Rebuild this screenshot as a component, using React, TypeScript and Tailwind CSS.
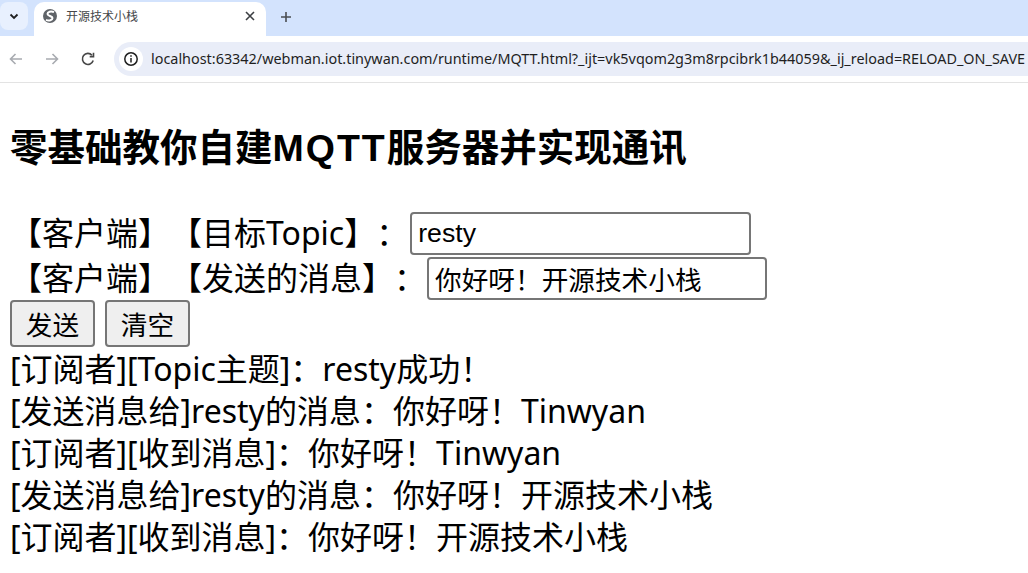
import React from "react";

const sans = "font-['Liberation_Sans','Noto_Sans_CJK_SC',sans-serif]";
const page = "font-['Noto_Sans','Noto_Sans_CJK_SC',sans-serif] [text-spacing-trim:space-all]";

function Globe() {
  return (
    <svg width="16" height="16" viewBox="0 0 16 16">
      <circle cx="8" cy="8" r="7" fill="#5f6368" />
      <path d="M12 4.2 C9 2.8 5.5 3.8 5.5 6 C5.5 8 10.5 8 10.5 10 C10.5 12 7 13.2 4 11.8" fill="none" stroke="#fff" strokeWidth="2" />
    </svg>
  );
}

function Arrow({ flip }: { flip?: boolean }) {
  return (
    <svg width="16" height="16" viewBox="0 0 16 16" fill="none" stroke="#a8abb0" strokeWidth="1.6" className={flip ? "-scale-x-100" : ""}>
      <path d="M14 8 H2.5 M7.5 3 L2.5 8 L7.5 13" />
    </svg>
  );
}

function Chrome() {
  return (
    <div className={`${sans} shrink-0`}>
      <div className="h-9 bg-[#d3e3fd] flex items-end">
        <div className="w-[28px] h-[28px] mb-[6px] rounded-lg bg-[#e8f0fe] flex items-center justify-center">
          <svg width="12" height="12" viewBox="0 0 12 12" fill="none" stroke="#1f1f1f" strokeWidth="1.8">
            <path d="M2.5 4.5 L6 8 L9.5 4.5" />
          </svg>
        </div>
        <div className="ml-[6px] w-[232px] h-[34px] bg-white rounded-t-[10px] flex items-center pl-[8px] pr-[10px] pb-[6px]">
          <Globe />
          <span className="ml-[8px] pt-[1px] text-[12px] text-[#45474a] flex-1">开源技术小栈</span>
          <svg width="12" height="12" viewBox="0 0 12 12" fill="none" stroke="#3c3f43" strokeWidth="1.6">
            <path d="M2 2 L10 10 M10 2 L2 10" />
          </svg>
        </div>
        <div className="ml-[14px] mb-[13px]">
          <svg width="12" height="12" viewBox="0 0 12 12" fill="none" stroke="#4a4d51" strokeWidth="1.6">
            <path d="M6 1 V11 M1 6 H11" />
          </svg>
        </div>
      </div>
      <div className="h-[47px] bg-white border-b border-[#e3e3e3] flex items-center pb-[1px]">
        <div className="ml-[8px]"><Arrow /></div>
        <div className="ml-[20px]"><Arrow flip /></div>
        <div className="ml-[20px]">
          <svg width="16" height="16" viewBox="0 0 16 16" fill="none" stroke="#474747" strokeWidth="1.6">
            <path d="M13.2 9.5 A5.5 5.5 0 1 1 12 4.2" />
            <path d="M13.5 1.8 V5.6 H9.7" />
          </svg>
        </div>
        <div className="ml-[18px] w-[914px] h-[34px] bg-[#e9edf8] rounded-l-[17px] flex items-center overflow-hidden">
          <div className="ml-[5px] w-[24px] h-[24px] rounded-full bg-white flex items-center justify-center shrink-0">
            <svg width="16" height="16" viewBox="0 0 16 16" fill="none" stroke="#1f1f1f" strokeWidth="1.5">
              <circle cx="8" cy="8" r="6.2" />
              <path d="M8 7 V11.5" />
              <path d="M8 4.3 V5.8" />
            </svg>
          </div>
          <span className="ml-[8px] text-[14.4px] text-[#1f1f1f] whitespace-nowrap font-['Noto_Sans','Noto_Sans_CJK_SC',sans-serif]">
            localhost:63342/webman.iot.tinywan.com/runtime/MQTT.html?_ijt=vk5vqom2g3m8rpcibrk1b44059&amp;_ij_reload=RELOAD_ON_SAVE
          </span>
        </div>
      </div>
    </div>
  );
}

const inputCls =
  "h-[43px] border-2 border-[#767676] rounded-[4px] px-[6px] bg-white text-black text-[26.67px] leading-none outline-none";
const btnCls =
  "h-[47px] w-[85px] pt-[5px] border-2 border-[#767676] rounded-[4px] bg-[#efefef] text-black text-[26.67px] leading-none flex items-center justify-center";

const lines = [
  "[订阅者][Topic主题]：resty成功！",
  "[发送消息给]resty的消息：你好呀！Tinwyan",
  "[订阅者][收到消息]：你好呀！Tinwyan",
  "[发送消息给]resty的消息：你好呀！开源技术小栈",
  "[订阅者][收到消息]：你好呀！开源技术小栈",
];

export default function App() {
  return (
    <div className={`w-[1028px] h-[573px] overflow-hidden bg-white text-black ${page}`}>
      <Chrome />
      <div className="pl-[10px]">
        <h3 className={`mt-[42px] h-[47px] text-[37.5px] leading-[47px] font-bold whitespace-nowrap ${sans}`}>
          零基础教你自建<span className="tracking-[2px]">MQTT</span>服务器并实现通讯
        </h3>
        <div className="mt-[39px] h-[45px] flex items-center text-[32px] whitespace-nowrap">
          <span className="-mt-[2px]">【客户端】【目标Topic】：</span>
          <input readOnly value="resty" className={`${inputCls} w-[341px] ml-[2px] ${sans}`} />
        </div>
        <div className="h-[44px] flex items-center text-[32px] whitespace-nowrap">
          <span>【客户端】【发送的消息】：</span>
          <input readOnly value="你好呀！开源技术小栈" className={`${inputCls} w-[340px] ml-[1px] self-end ${sans}`} />
        </div>
        <div className="flex gap-[10px] mb-[1px]">
          <button className={`${btnCls} ${sans}`}>发送</button>
          <button className={`${btnCls} ${sans}`}>清空</button>
        </div>
        <div className="text-[32px] leading-[42px] whitespace-nowrap">
          {lines.map((l) => (
            <div key={l}>{l}</div>
          ))}
        </div>
      </div>
    </div>
  );
}
